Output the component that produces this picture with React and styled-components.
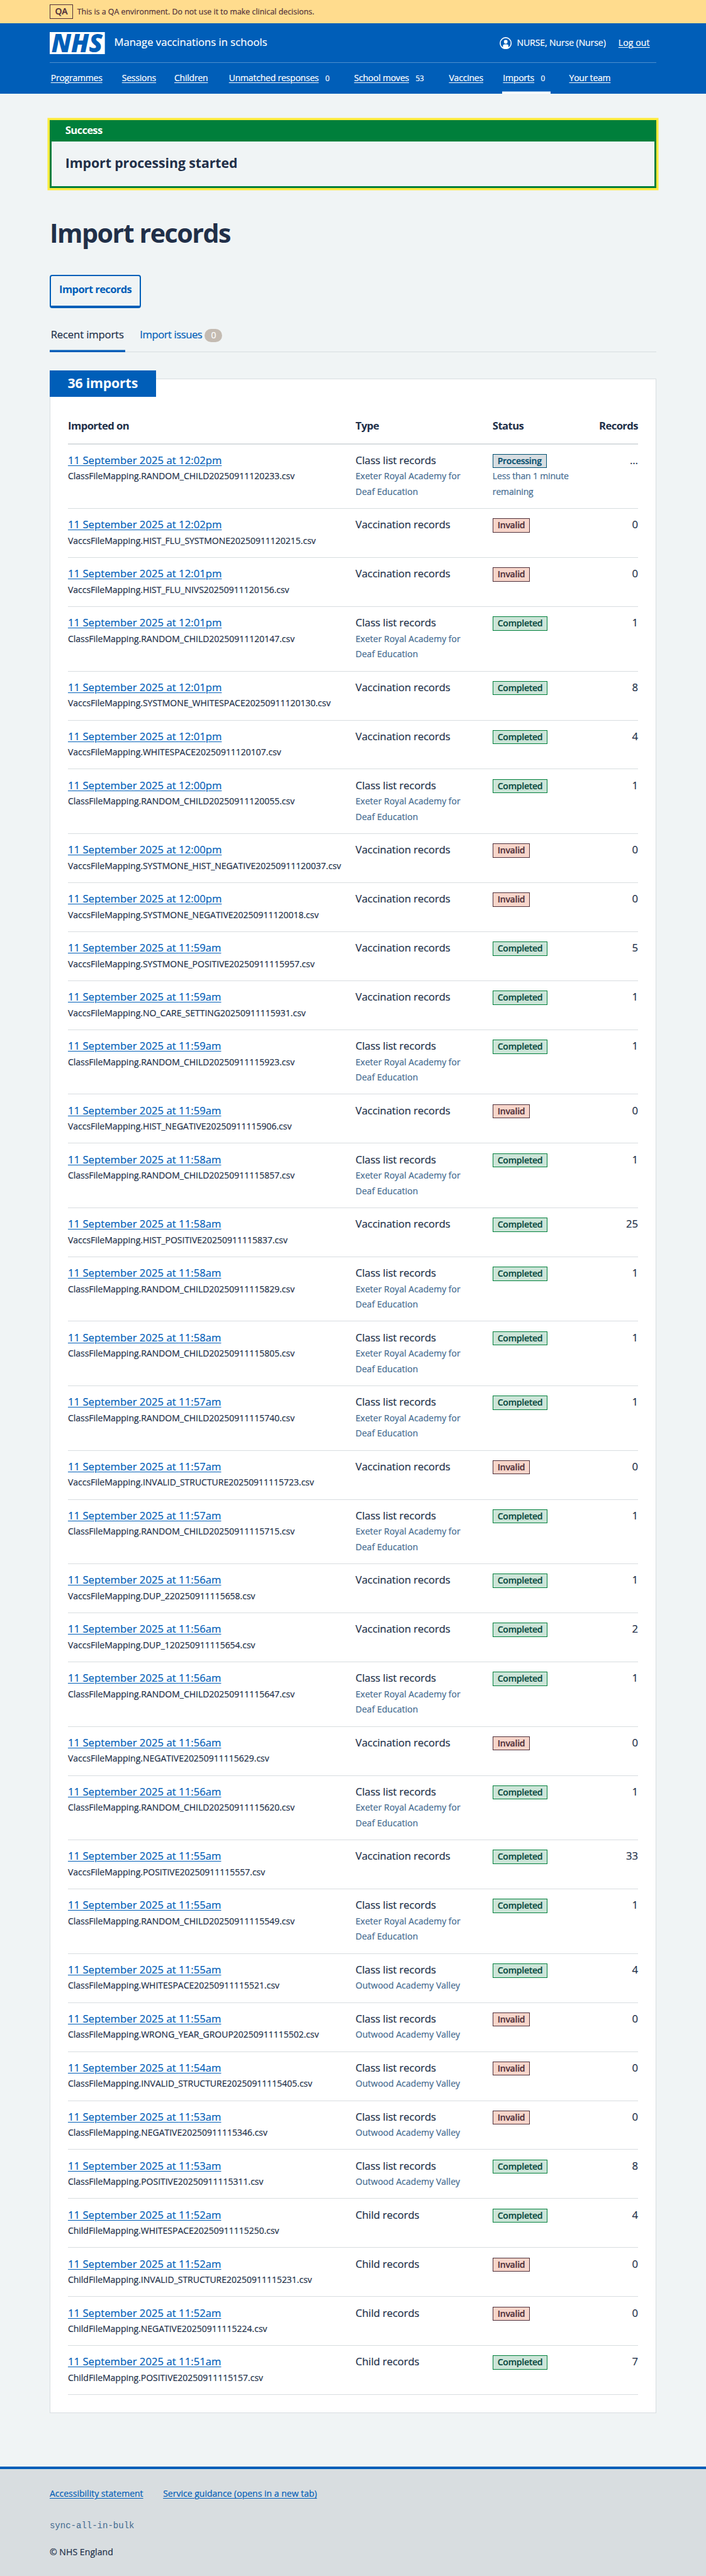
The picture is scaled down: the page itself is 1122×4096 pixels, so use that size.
import React from "react";
import styled, { createGlobalStyle } from "styled-components";

/* Design units are scaled down to the compact page width. */
const SCALE = 0.8765;
const u = (...values) => values.map((v) => `${+(v * SCALE).toFixed(3)}px`).join(" ");

const color = {
  blue: "#005eb8",
  text: "#212f48",
  secondary: "#436a8f",
  page: "#f0f4f5",
  line: "#d8dde0",
  green: "#007f3b",
  brown: "#4f2f39",
};

const GlobalStyle = createGlobalStyle`
  html { background: ${color.line}; }
  body {
    margin: 0;
    background: ${color.page};
    color: ${color.text};
    font-family: "Open Sans", "Noto Sans", sans-serif;
    font-size: ${u(19)};
    font-weight: 400;
    line-height: ${u(28)};
    -webkit-text-stroke: 0.2px;
  }
`;

const Container = styled.div`
  width: ${u(1100)};
  margin: 0 auto;
`;

const Link = styled.a`
  color: ${(p) => (p.$light ? "#fff" : color.blue)};
  text-decoration: underline;
  text-decoration-thickness: 1px;
  text-underline-offset: ${u(2)};
  white-space: nowrap;
`;

/* Environment banner */
const EnvironmentBanner = styled.div`
  background: #ffdc8e;
  color: ${color.brown};
  height: ${u(42)};
`;
const EnvironmentRow = styled(Container)`
  display: flex;
  align-items: center;
  gap: ${u(8)};
  height: 100%;
`;
const EnvironmentTag = styled.strong`
  box-sizing: border-box;
  width: ${u(42)};
  height: ${u(26)};
  border: 1px solid ${color.brown};
  font-size: ${u(16)};
  font-weight: 600;
  line-height: ${u(23)};
  letter-spacing: ${u(-0.5)};
  text-align: center;
`;
const EnvironmentText = styled.span`
  font-size: ${u(14.1)};
  letter-spacing: ${u(0.03)};
  line-height: ${u(24)};
  white-space: nowrap;
`;

/* Header */
const Header = styled.header`
  height: ${u(128)};
  background: ${color.blue};
  color: #fff;
`;
const HeaderTop = styled.div`
  box-sizing: border-box;
  display: flex;
  align-items: center;
  height: ${u(72)};
  padding-top: ${u(1)};
  border-bottom: 1px solid #4d8ecd;
`;
const Logo = styled.svg`
  width: ${u(100)};
  height: ${u(40)};
  overflow: visible;
`;
const LogoText = styled.text`
  font-family: "Open Sans", sans-serif;
  font-size: 47px;
  font-style: italic;
  font-weight: 800;
  fill: ${color.blue};
`;
const ServiceName = styled.span`
  margin-left: ${u(17)};
  padding-bottom: ${u(2)};
`;
const Account = styled.div`
  display: flex;
  align-items: center;
  margin-left: auto;
  padding-right: ${u(12)};
  font-size: ${u(16)};
  letter-spacing: ${u(0.12)};
`;
const UserIcon = styled.svg`
  width: ${u(22)};
  height: ${u(22)};
  margin-right: ${u(9)};
`;
const UserName = styled.span`
  width: ${u(184)};
  letter-spacing: ${u(-0.1)};
  white-space: nowrap;
`;
const Nav = styled.nav`
  display: flex;
  gap: ${u(32)};
  height: ${u(56)};
  font-size: ${u(16)};
  letter-spacing: ${u(-0.26)};
  line-height: ${u(55.5)};
`;
const NavItem = styled.div`
  box-sizing: border-box;
  display: flex;
  width: ${(p) => u(p.$width)};
  padding: 0 ${u(2)};
  box-shadow: ${(p) => (p.$current ? `inset 0 -${u(4)} #fff` : "none")};
`;
const NavCount = styled.span`
  margin-left: ${u(12)};
  font-size: ${u(13.5)};
`;

/* Success banner */
const Alert = styled.section`
  box-sizing: border-box;
  height: ${u(123)};
  margin-top: ${u(48)};
  border: ${u(4)} solid ${color.green};
  border-top: 0;
  box-shadow: 0 0 0 ${u(4)} #ffeb3b;
`;
const AlertHeading = styled.h2`
  margin: 0;
  height: ${u(39)};
  padding-left: ${u(25)};
  background: ${color.green};
  color: #fff;
  font-size: ${u(19)};
  font-weight: 700;
  line-height: ${u(37)};
  letter-spacing: ${u(-0.8)};
  -webkit-text-stroke: 0;
`;
const AlertTitle = styled.h3`
  margin: 0;
  padding-left: ${u(25)};
  font-size: ${u(24.3)};
  font-weight: 700;
  line-height: ${u(78)};
  letter-spacing: ${u(-0.1)};
  -webkit-text-stroke: 0;
`;

/* Page heading, action and tabs */
const PageTitle = styled.h1`
  margin: ${u(53.5)} 0 ${u(48.5)};
  font-size: ${u(47)};
  font-weight: 700;
  line-height: ${u(56)};
  letter-spacing: ${u(-1.7)};
  -webkit-text-stroke: 0;
`;
const Button = styled.button`
  box-sizing: border-box;
  display: block;
  width: ${u(166)};
  height: ${u(60)};
  padding: 0 0 ${u(5)};
  border: 2px solid ${color.blue};
  border-bottom-width: 4px;
  border-radius: 4px;
  background: transparent;
  color: ${color.blue};
  font: 700 ${u(18.8)} / ${u(48)} "Open Sans", sans-serif;
  letter-spacing: ${u(-0.65)};
  white-space: nowrap;
  -webkit-text-stroke: 0;
`;
const Tabs = styled.div`
  display: flex;
  height: ${u(56)};
  margin-top: ${u(24)};
  box-shadow: inset 0 -1px ${color.line};
  line-height: ${u(49)};
`;
const Tab = styled.div`
  box-sizing: border-box;
  display: flex;
  height: 100%;
  width: ${(p) => u(p.$width)};
  margin-right: ${u(24.5)};
  padding-left: ${u(2)};
  color: ${(p) => (p.$active ? color.text : color.blue)};
  box-shadow: ${(p) => (p.$active ? `inset 0 -${u(4)} ${color.blue}` : "none")};
  letter-spacing: ${(p) => u(p.$active ? -0.15 : -0.5)};
  white-space: nowrap;
`;
const TabCount = styled.span`
  width: ${u(32)};
  height: ${u(24)};
  margin: ${u(14)} 0 0 auto;
  border-radius: ${u(12)};
  background: #c4bbb2;
  color: #fff;
  font-size: ${u(16)};
  line-height: ${u(23)};
  text-align: center;
`;

/* Results card */
const Card = styled.section`
  box-sizing: border-box;
  margin-top: ${u(48)};
  padding: 0 ${u(32)} ${u(32)};
  border: 1px solid ${color.line};
  background: #fff;
`;
const CardHeading = styled.h2`
  box-sizing: border-box;
  width: ${u(193)};
  height: ${u(48)};
  margin: ${u(-16)} 0 0 calc(${u(-32)} - 1px);
  padding-left: ${u(32.5)};
  background: ${color.blue};
  color: #fff;
  font-size: ${u(24.3)};
  font-weight: 700;
  line-height: ${u(46)};
  letter-spacing: ${u(-0.2)};
  -webkit-text-stroke: 0;
`;
const Row = styled.div`
  box-sizing: border-box;
  display: grid;
  grid-template-columns: ${u(521.5, 248.5, 170)} 1fr;
  align-items: start;
  height: ${(p) => u(p.$lines === 3 ? 117 : 88.97)};
  padding-top: ${u(15)};
  border-bottom: 1px solid ${color.line};
`;
const HeadRow = styled(Row)`
  height: ${u(86)};
  padding-top: ${u(38.5)};
  border-bottom-width: 2px;
  font-weight: 700;
  letter-spacing: ${u(-0.65)};
  -webkit-text-stroke: 0;
`;
const Cell = styled.div`
  padding-right: ${u(32)};
  letter-spacing: ${u(-0.12)};
`;
const ImportedCell = styled.div`
  letter-spacing: ${u(0.05)};
`;
const CountCell = styled.div`
  text-align: right;
`;
const FileName = styled.span`
  font-size: ${u(16)};
  line-height: 1;
  letter-spacing: ${u(-0.03)};
  white-space: nowrap;
`;
const Hint = styled.span`
  color: ${color.secondary};
  font-size: ${u(16)};
  line-height: 1;
  letter-spacing: ${(p) => u(p.$tight ? -0.2 : 0)};
`;
const tagTones = {
  Processing: { ink: "#004c6c", line: "#005070", fill: "#d7dde1" },
  Invalid: { ink: color.brown, line: color.brown, fill: "#f7d5ca" },
  Completed: { ink: "#0a4a40", line: color.green, fill: "#cce5d8" },
};
const Tag = styled.strong`
  display: inline-block;
  box-sizing: border-box;
  height: ${u(26)};
  margin: ${u(-6, 0, -6)};
  padding: 0 ${u(7.8)};
  border: 1px solid ${(p) => tagTones[p.$status].line};
  background: ${(p) => tagTones[p.$status].fill};
  color: ${(p) => tagTones[p.$status].ink};
  font-size: ${u(16)};
  font-weight: 600;
  line-height: ${u(23.4)};
  letter-spacing: ${u(-0.28)};
`;

/* Footer */
const Footer = styled.footer`
  box-sizing: border-box;
  height: ${u(199.5)};
  margin-top: ${u(96)};
  padding-top: ${u(31.5)};
  border-top: 4px solid ${color.blue};
  background: ${color.line};
  font-size: ${u(16)};
`;
const FooterLinks = styled.div`
  display: flex;
  gap: ${u(36)};
`;
const Release = styled.div`
  margin: ${u(30, 0, 20)};
  color: ${color.secondary};
  font-family: "Liberation Mono", monospace;
  -webkit-text-stroke: 0;
`;
const Copyright = styled.div`
  letter-spacing: ${u(0.08)};
`;

const navigation = [
  { label: "Programmes", width: 97 },
  { label: "Sessions", width: 63 },
  { label: "Children", width: 67 },
  { label: "Unmatched responses", width: 195, count: 0 },
  { label: "School moves", width: 140, count: 53 },
  { label: "Vaccines", width: 66 },
  { label: "Imports", width: 88, count: 0, current: true },
  { label: "Your team", width: 82 },
];

const EXETER = "Exeter Royal Academy for Deaf Education";
const OUTWOOD = "Outwood Academy Valley";
const CLASS = "Class list records";
const VACCS = "Vaccination records";
const CHILD = "Child records";

const imports = [
  ["12:02pm", "ClassFileMapping.RANDOM_CHILD20250911120233", CLASS, EXETER, "Processing", "…"],
  ["12:02pm", "VaccsFileMapping.HIST_FLU_SYSTMONE20250911120215", VACCS, null, "Invalid", 0],
  ["12:01pm", "VaccsFileMapping.HIST_FLU_NIVS20250911120156", VACCS, null, "Invalid", 0],
  ["12:01pm", "ClassFileMapping.RANDOM_CHILD20250911120147", CLASS, EXETER, "Completed", 1],
  ["12:01pm", "VaccsFileMapping.SYSTMONE_WHITESPACE20250911120130", VACCS, null, "Completed", 8],
  ["12:01pm", "VaccsFileMapping.WHITESPACE20250911120107", VACCS, null, "Completed", 4],
  ["12:00pm", "ClassFileMapping.RANDOM_CHILD20250911120055", CLASS, EXETER, "Completed", 1],
  ["12:00pm", "VaccsFileMapping.SYSTMONE_HIST_NEGATIVE20250911120037", VACCS, null, "Invalid", 0],
  ["12:00pm", "VaccsFileMapping.SYSTMONE_NEGATIVE20250911120018", VACCS, null, "Invalid", 0],
  ["11:59am", "VaccsFileMapping.SYSTMONE_POSITIVE20250911115957", VACCS, null, "Completed", 5],
  ["11:59am", "VaccsFileMapping.NO_CARE_SETTING20250911115931", VACCS, null, "Completed", 1],
  ["11:59am", "ClassFileMapping.RANDOM_CHILD20250911115923", CLASS, EXETER, "Completed", 1],
  ["11:59am", "VaccsFileMapping.HIST_NEGATIVE20250911115906", VACCS, null, "Invalid", 0],
  ["11:58am", "ClassFileMapping.RANDOM_CHILD20250911115857", CLASS, EXETER, "Completed", 1],
  ["11:58am", "VaccsFileMapping.HIST_POSITIVE20250911115837", VACCS, null, "Completed", 25],
  ["11:58am", "ClassFileMapping.RANDOM_CHILD20250911115829", CLASS, EXETER, "Completed", 1],
  ["11:58am", "ClassFileMapping.RANDOM_CHILD20250911115805", CLASS, EXETER, "Completed", 1],
  ["11:57am", "ClassFileMapping.RANDOM_CHILD20250911115740", CLASS, EXETER, "Completed", 1],
  ["11:57am", "VaccsFileMapping.INVALID_STRUCTURE20250911115723", VACCS, null, "Invalid", 0],
  ["11:57am", "ClassFileMapping.RANDOM_CHILD20250911115715", CLASS, EXETER, "Completed", 1],
  ["11:56am", "VaccsFileMapping.DUP_220250911115658", VACCS, null, "Completed", 1],
  ["11:56am", "VaccsFileMapping.DUP_120250911115654", VACCS, null, "Completed", 2],
  ["11:56am", "ClassFileMapping.RANDOM_CHILD20250911115647", CLASS, EXETER, "Completed", 1],
  ["11:56am", "VaccsFileMapping.NEGATIVE20250911115629", VACCS, null, "Invalid", 0],
  ["11:56am", "ClassFileMapping.RANDOM_CHILD20250911115620", CLASS, EXETER, "Completed", 1],
  ["11:55am", "VaccsFileMapping.POSITIVE20250911115557", VACCS, null, "Completed", 33],
  ["11:55am", "ClassFileMapping.RANDOM_CHILD20250911115549", CLASS, EXETER, "Completed", 1],
  ["11:55am", "ClassFileMapping.WHITESPACE20250911115521", CLASS, OUTWOOD, "Completed", 4],
  ["11:55am", "ClassFileMapping.WRONG_YEAR_GROUP20250911115502", CLASS, OUTWOOD, "Invalid", 0],
  ["11:54am", "ClassFileMapping.INVALID_STRUCTURE20250911115405", CLASS, OUTWOOD, "Invalid", 0],
  ["11:53am", "ClassFileMapping.NEGATIVE20250911115346", CLASS, OUTWOOD, "Invalid", 0],
  ["11:53am", "ClassFileMapping.POSITIVE20250911115311", CLASS, OUTWOOD, "Completed", 8],
  ["11:52am", "ChildFileMapping.WHITESPACE20250911115250", CHILD, null, "Completed", 4],
  ["11:52am", "ChildFileMapping.INVALID_STRUCTURE20250911115231", CHILD, null, "Invalid", 0],
  ["11:52am", "ChildFileMapping.NEGATIVE20250911115224", CHILD, null, "Invalid", 0],
  ["11:51am", "ChildFileMapping.POSITIVE20250911115157", CHILD, null, "Completed", 7],
];

function ImportRow({ time, file, type, school, status, records }) {
  return (
    <Row $lines={school === EXETER ? 3 : 2}>
      <ImportedCell>
        <Link>11 September 2025 at {time}</Link>
        <br />
        <FileName>{file}.csv</FileName>
      </ImportedCell>
      <Cell>
        {type}
        {school && (
          <>
            <br />
            <Hint>{school}</Hint>
          </>
        )}
      </Cell>
      <div>
        <Tag $status={status}>{status}</Tag>
        {status === "Processing" && (
          <>
            <br />
            <Hint $tight>Less than 1 minute remaining</Hint>
          </>
        )}
      </div>
      <CountCell>{records}</CountCell>
    </Row>
  );
}

export default function App() {
  return (
    <>
      <GlobalStyle />
      <EnvironmentBanner>
        <EnvironmentRow>
          <EnvironmentTag>QA</EnvironmentTag>
          <EnvironmentText>
            This is a QA environment. Do not use it to make clinical decisions.
          </EnvironmentText>
        </EnvironmentRow>
      </EnvironmentBanner>

      <Header>
        <Container>
          <HeaderTop>
            <Logo viewBox="0 0 100 40">
              <rect width="100" height="40" fill="#fff" />
              <LogoText x="3" y="36.7" textLength="93" lengthAdjust="spacingAndGlyphs">
                NHS
              </LogoText>
            </Logo>
            <ServiceName>Manage vaccinations in schools</ServiceName>
            <Account>
              <UserIcon viewBox="0 0 22 22">
                <circle cx="11" cy="11" r="10" fill="none" stroke="#fff" strokeWidth="1.8" />
                <rect x="7.8" y="5" width="6.6" height="7" rx="2.8" fill="#fff" />
                <path d="M6 19.6V16a3 3 0 0 1 3-3h4a3 3 0 0 1 3 3v3.600A10 10 0 0 1 6 19.600Z" fill="#fff" />
              </UserIcon>
              <UserName>NURSE, Nurse (Nurse)</UserName>
              <Link $light>Log out</Link>
            </Account>
          </HeaderTop>
          <Nav>
            {navigation.map(({ label, width, count, current }) => (
              <NavItem key={label} $width={width} $current={current}>
                <Link $light>{label}</Link>
                {count !== undefined && <NavCount>{count}</NavCount>}
              </NavItem>
            ))}
          </Nav>
        </Container>
      </Header>

      <Container as="main">
        <Alert>
          <AlertHeading>Success</AlertHeading>
          <AlertTitle>Import processing started</AlertTitle>
        </Alert>

        <PageTitle>Import records</PageTitle>
        <Button>Import records</Button>

        <Tabs>
          <Tab $active $width={137}>Recent imports</Tab>
          <Tab $width={151.5}>
            Import issues
            <TabCount>0</TabCount>
          </Tab>
        </Tabs>

        <Card>
          <CardHeading>36 imports</CardHeading>
          <HeadRow>
            <div>Imported on</div>
            <div>Type</div>
            <div>Status</div>
            <CountCell>Records</CountCell>
          </HeadRow>
          {imports.map(([time, file, type, school, status, records]) => (
            <ImportRow
              key={file}
              time={time}
              file={file}
              type={type}
              school={school}
              status={status}
              records={records}
            />
          ))}
        </Card>
      </Container>

      <Footer>
        <Container>
          <FooterLinks>
            <Link>Accessibility statement</Link>
            <Link>Service guidance (opens in a new tab)</Link>
          </FooterLinks>
          <Release>sync-all-in-bulk</Release>
          <Copyright>© NHS England</Copyright>
        </Container>
      </Footer>
    </>
  );
}
